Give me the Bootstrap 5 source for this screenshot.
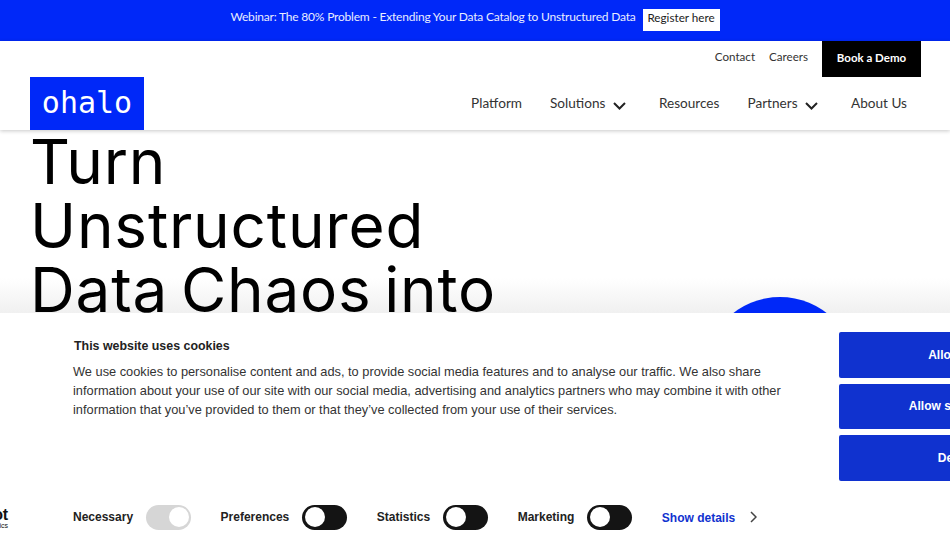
<!doctype html>
<html lang="en"><head><meta charset="utf-8"><title>Ohalo</title>
<link href="https://cdn.jsdelivr.net/npm/bootstrap@5.3.0/dist/css/bootstrap.min.css" rel="stylesheet">
<style>
html,body{height:534px;overflow:hidden;background:#fff}
body{font-family:Lato,"Liberation Sans",sans-serif;color:#222}
.promo{height:41px;background:#0028f8;color:#e8ecff;font-size:12px;letter-spacing:-.2px;padding-bottom:8px}
.promo-btn{background:#fff;color:#222;font-size:11.700px;letter-spacing:0;height:22px;width:77px;margin-left:7px;margin-top:6px;padding-bottom:3px}
.site-head{height:89px;box-shadow:0 1px 4px rgba(0,0,0,.22);position:relative;z-index:1;padding-left:30px;padding-right:29px}
.util-row{height:36px;gap:14px}
.util-row a{font-size:11.600px;color:#333;text-decoration:none;padding-bottom:4px}
.util-row a.demo{background:#000;width:99px;height:36px;color:#fff;font-weight:700;font-size:11.500px;padding-bottom:3px}
.logo-box{background:#0028f8;width:114px;height:53px;color:#fff;font-family:"DejaVu Sans Mono",monospace;font-size:30px;line-height:51px;text-align:center}
.main-nav{gap:28px;padding-right:14px;height:53px;padding-bottom:1px}
.main-nav a{font-size:13.600px;color:#333;text-decoration:none;white-space:nowrap}
.main-nav svg{margin-left:4px;margin-right:5px;vertical-align:-2px}
.hero{position:relative;height:404px;padding:0 0 0 30px;background:linear-gradient(#fff 148px,#f0f0f0 183px)}
.hero-title{font-family:"Inter",sans-serif;font-weight:400;font-size:62px;line-height:64px;color:#000;margin:0;letter-spacing:.8px;word-spacing:-5.500px}
.blue-dot{position:absolute;left:704px;top:167px;width:152px;height:152px;border-radius:50%;background:#0028f8}
.cookie{position:absolute;left:0;top:313px;width:950px;height:221px;background:#fff;z-index:2;font-family:"Liberation Sans",Arial,sans-serif;color:#333;padding-left:73px}
.cookie-title{font-size:12.400px;font-weight:700;color:#222;margin:0;padding-top:26px;padding-left:1px;line-height:15px}
.cookie-text{font-size:12.800px;line-height:19.200px;margin:8px 0 0;width:720px}
.cookie-btns{position:absolute;left:839px;top:19px;width:227px;gap:6px}
.allow{background:#1032cf;color:#fff;border-radius:2px;height:45.500px;font-size:12px;font-weight:700}
.cookie-bottom{position:absolute;left:73px;top:191px;height:26px}
.tog-label{font-size:12px;font-weight:700;color:#222}
.tog{width:45px;height:25px;border-radius:13px;background:#141414;position:relative;margin:0 30px 0 12.500px;display:block}
.tog::before{content:"";position:absolute;left:3px;top:2.500px;width:20px;height:20px;border-radius:50%;background:#fff}
.tog.is-on{background:#d6d6d6}
.tog.is-on::before{left:23px}
.mark-clip{position:absolute;left:-92px;top:194px;width:100px;text-align:right;line-height:1;color:#111}
.mark-clip b{font-size:16px;display:block;margin-bottom:-1px;letter-spacing:-.2px}
.mark-clip span{font-size:7px;display:block}
.show{color:#1032cf;font-size:12px;font-weight:700;text-decoration:none;padding-top:2px}
.show-arrow{margin-left:15px}
</style></head><body>
<div class="promo d-flex align-items-center justify-content-center"><span>Webinar: The 80% Problem - Extending Your Data Catalog to Unstructured Data</span><a class="promo-btn d-flex align-items-center justify-content-center text-decoration-none" href="#">Register here</a></div>
<header class="site-head bg-white">
<div class="util-row d-flex justify-content-end align-items-center"><a href="#">Contact</a><a href="#">Careers</a><a class="demo d-flex align-items-center justify-content-center" href="#">Book a Demo</a></div>
<div class="d-flex justify-content-between"><a class="logo-box text-decoration-none" href="#">ohalo</a>
<nav class="main-nav d-flex align-items-center"><a href="#">Platform</a><a href="#">Solutions <svg width="13" height="8" viewBox="0 0 13 8" fill="none" stroke="#222" stroke-width="2"><path d="M1 1l5.500 5.500L12 1"/></svg></a><a href="#">Resources</a><a href="#">Partners <svg width="13" height="8" viewBox="0 0 13 8" fill="none" stroke="#222" stroke-width="2"><path d="M1 1l5.500 5.500L12 1"/></svg></a><a href="#">About Us</a></nav></div>
</header>
<section class="hero"><h1 class="hero-title">Turn<br>Unstructured<br>Data Chaos into</h1><div class="blue-dot"></div></section>
<aside class="cookie">
<p class="cookie-title">This website uses cookies</p>
<p class="cookie-text">We use cookies to personalise content and ads, to provide social media features and to analyse our traffic. We also share information about your use of our site with our social media, advertising and analytics partners who may combine it with other information that you’ve provided to them or that they’ve collected from your use of their services.</p>
<div class="cookie-btns d-flex flex-column"><a class="allow d-flex align-items-center justify-content-center text-decoration-none" href="#">Allow all</a><a class="allow d-flex align-items-center justify-content-center text-decoration-none" href="#">Allow selection</a><a class="allow d-flex align-items-center justify-content-center text-decoration-none" href="#">Deny</a></div>
<div class="mark-clip"><b>Cookiebot</b><span>by Usercentrics</span></div>
<div class="cookie-bottom d-flex align-items-center"><span class="tog-label">Necessary</span><span class="tog is-on"></span><span class="tog-label">Preferences</span><span class="tog"></span><span class="tog-label">Statistics</span><span class="tog"></span><span class="tog-label">Marketing</span><span class="tog"></span><a class="show" href="#">Show details</a><svg class="show-arrow" width="7" height="12" viewBox="0 0 7 12" fill="none" stroke="#444" stroke-width="1.500"><path d="M1 1l5 5-5 5"/></svg></div>
</aside>
</body></html>
